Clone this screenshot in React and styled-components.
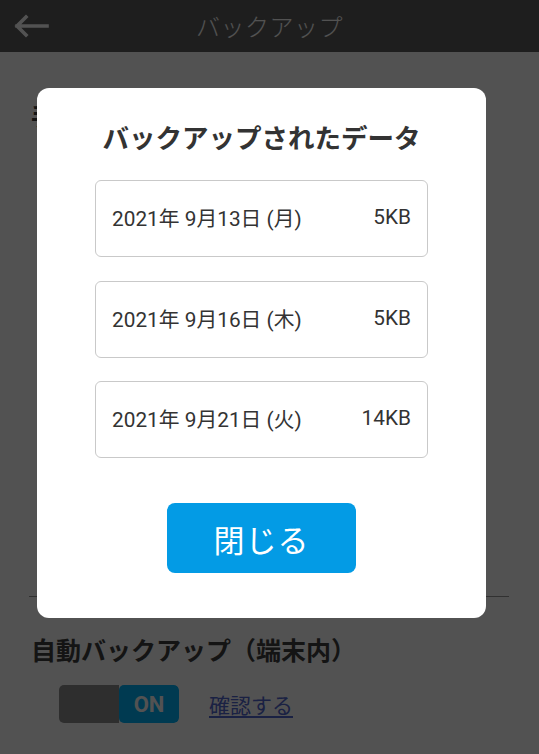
import React from "react";
import styled, { createGlobalStyle } from "styled-components";

const GlobalStyle = createGlobalStyle`
  html, body { margin: 0; padding: 0; background: #ffffff; }
  body { font-family: Roboto, "Noto Sans CJK JP", sans-serif; }
  * { box-sizing: border-box; }
`;

const Page = styled.div`
  width: 539px;
  min-height: 754px;
  background: #ffffff;
`;

const Header = styled.header`
  height: 52px;
  background: #5e5e5e;
  display: grid;
  grid-template-columns: 60px 1fr 60px;
  align-items: center;
`;

const BackButton = styled.div`
  display: flex;
  align-items: center;
  padding-left: 13px;
  color: #ffffff;
`;

const HeaderTitle = styled.h1`
  margin: 0;
  text-align: center;
  font-family: "Noto Sans CJK JP", sans-serif;
  font-weight: 300;
  font-size: 24px;
  line-height: 52px;
  color: #ffffff;
  letter-spacing: 0.5px;
`;

const Content = styled.main`
  padding: 0 30px 0 29px;
`;

const Section = styled.section`
  padding-top: ${(p) => p.$top}px;
  height: ${(p) => (p.$height ? `${p.$height}px` : "auto")};
`;

const SectionTitle = styled.h2`
  margin: 0;
  padding-left: 2px;
  font-family: "Noto Sans CJK JP", sans-serif;
  font-weight: 700;
  font-size: 25px;
  line-height: 36px;
  color: #404040;
  white-space: nowrap;
`;

const Divider = styled.hr`
  margin: 0;
  border: none;
  height: 1px;
  background: #9a9a9a;
`;

const ControlRow = styled.div`
  display: flex;
  align-items: center;
  gap: 30px;
  margin-top: ${(p) => p.$top}px;
  padding-left: 30px;
`;

const Toggle = styled.div`
  display: flex;
  width: 120px;
  height: 38px;
  border-radius: 5px;
  overflow: hidden;
`;

const ToggleHalf = styled.div`
  flex: 1;
  display: flex;
  align-items: center;
  justify-content: center;
  background: ${(p) => (p.$on ? "#00b4fc" : "#8f8f8f")};
  color: #ffffff;
  font-family: Roboto, sans-serif;
  font-weight: 700;
  font-size: 22px;
  border-radius: ${(p) => (p.$on ? "5px" : "0")};
`;

const Link = styled.a`
  font-family: "Noto Sans CJK JP", sans-serif;
  font-size: 21px;
  color: #5266d0;
  text-decoration: underline;
  text-underline-offset: 3px;
`;

const Overlay = styled.div`
  position: fixed;
  inset: 0;
  background: rgba(0, 0, 0, 0.68);
  padding: 88px 0 0 37px;
`;

const Modal = styled.div`
  width: 449px;
  background: #ffffff;
  border-radius: 12px;
  padding: 29px 58px 45px;
  display: flex;
  flex-direction: column;
  align-items: center;
`;

const ModalTitle = styled.h3`
  margin: 0 0 24px;
  font-family: "Noto Sans CJK JP", sans-serif;
  font-weight: 700;
  font-size: 26.5px;
  line-height: 39px;
  color: #333333;
  white-space: nowrap;
`;

const List = styled.div`
  width: 100%;
  display: flex;
  flex-direction: column;
  gap: 23.5px;
`;

const Item = styled.div`
  height: 77px;
  border: 1.5px solid #c9c9c9;
  border-radius: 6px;
  display: flex;
  align-items: center;
  justify-content: space-between;
  padding: 0 16px 3px;
  font-family: Roboto, "Noto Sans CJK JP", sans-serif;
  font-size: 20.8px;
  color: #333333;
`;

const CloseButton = styled.button`
  margin-top: 45px;
  width: 189px;
  height: 70px;
  border: none;
  border-radius: 8px;
  background: #039be5;
  color: #ffffff;
  font-family: "Noto Sans CJK JP", sans-serif;
  font-size: 31px;
  letter-spacing: 1px;
`;

const backups = [
  { date: "2021年 9月13日 (月)", size: "5KB" },
  { date: "2021年 9月16日 (木)", size: "5KB" },
  { date: "2021年 9月21日 (火)", size: "14KB" },
];

export default function App() {
  return (
    <>
      <GlobalStyle />
      <Page>
        <Header>
          <BackButton>
            <svg width="36" height="24" viewBox="0 0 36 24" fill="none">
              <path
                d="M34 12H4M13 3L4 12l9 9"
                stroke="currentColor"
                strokeWidth="3.6"
                strokeLinecap="square"
              />
            </svg>
          </BackButton>
          <HeaderTitle>バックアップ</HeaderTitle>
          <div />
        </Header>
        <Content>
          <Section $top={45} $height={544}>
            <SectionTitle>手動バックアップ</SectionTitle>
            <ControlRow $top={30}>
              <Link>バックアップする</Link>
            </ControlRow>
          </Section>
          <Divider />
          <Section $top={34}>
            <SectionTitle>自動バックアップ（端末内）</SectionTitle>
            <ControlRow $top={18}>
              <Toggle>
                <ToggleHalf />
                <ToggleHalf $on>ON</ToggleHalf>
              </Toggle>
              <Link>確認する</Link>
            </ControlRow>
          </Section>
        </Content>
      </Page>
      <Overlay>
        <Modal>
          <ModalTitle>バックアップされたデータ</ModalTitle>
          <List>
            {backups.map((b) => (
              <Item key={b.date}>
                <span>{b.date}</span>
                <span>{b.size}</span>
              </Item>
            ))}
          </List>
          <CloseButton>閉じる</CloseButton>
        </Modal>
      </Overlay>
    </>
  );
}
